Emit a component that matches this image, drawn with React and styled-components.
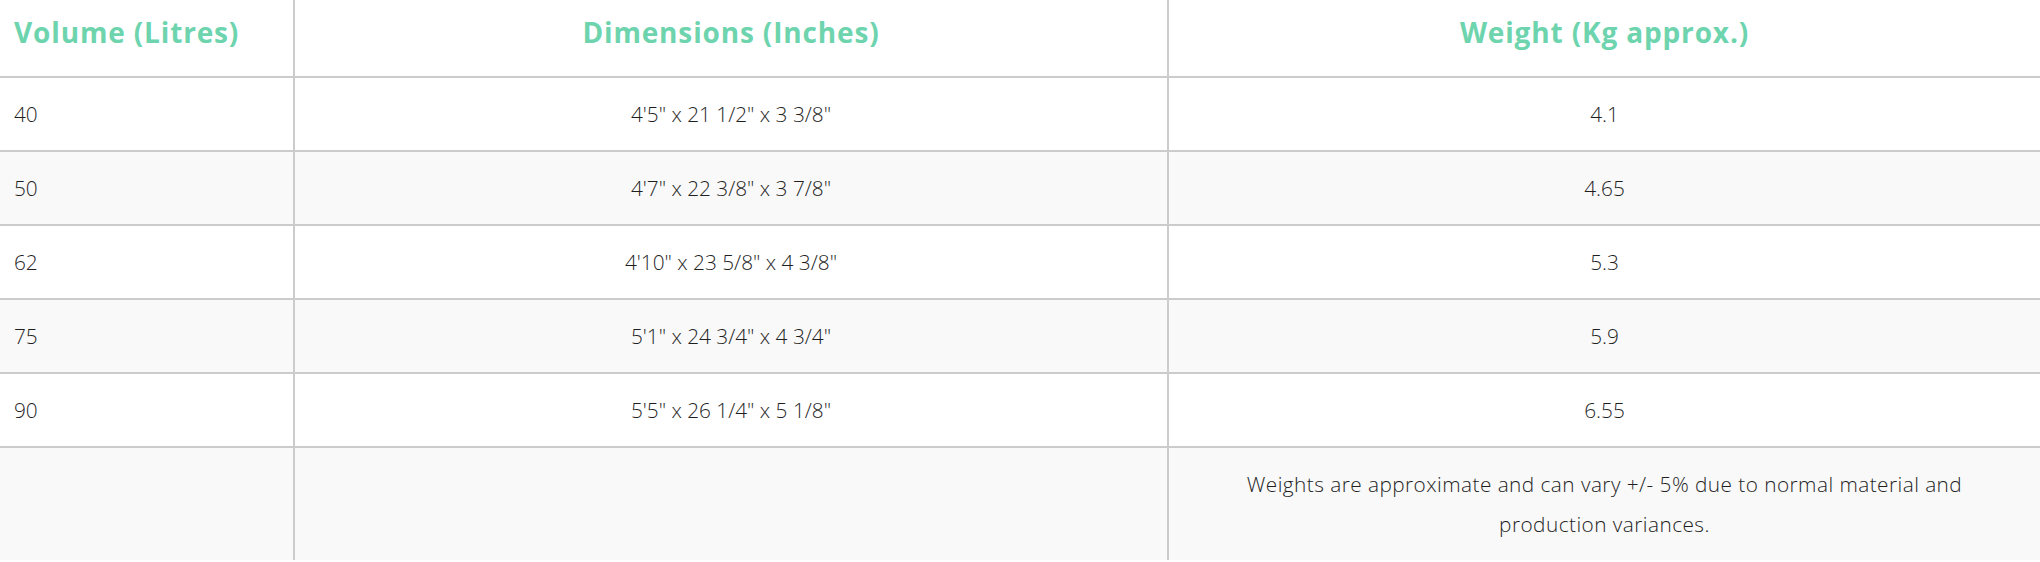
import React from "react";
import styled, { createGlobalStyle } from "styled-components";

const Global = createGlobalStyle`
  html, body { margin: 0; padding: 0; background: #ffffff; }
  body { font-family: "Open Sans", "Liberation Sans", sans-serif; }
`;

const Table = styled.table`
  width: 2040px;
  border-collapse: collapse;
  table-layout: fixed;
  font-family: "Open Sans", "Liberation Sans", sans-serif;
`;

const Col = styled.col`
  width: ${(p) => p.$w};
`;

const HeadCell = styled.th`
  height: 76px;
  box-sizing: border-box;
  padding: 12px 14px 24px;
  font-size: 28px;
  line-height: 40px;
  font-weight: 700;
  letter-spacing: 0.85px;
  color: #6dd4ae;
  text-align: ${(p) => p.$align || "center"};
  vertical-align: middle;
  border-bottom: 2px solid #cccccc;
  border-right: ${(p) => (p.$last ? "none" : "2px solid #cccccc")};
  white-space: nowrap;
`;

const Row = styled.tr`
  background: ${(p) => (p.$alt ? "#f9f9f9" : "#ffffff")};
`;

const Cell = styled.td`
  height: 72px;
  box-sizing: border-box;
  padding: 16px 14px;
  font-size: 20.8px;
  line-height: 40px;
  font-weight: 300;
  color: #1f1f1f;
  text-align: ${(p) => p.$align || "center"};
  vertical-align: middle;
  border-bottom: 2px solid #cccccc;
  border-right: ${(p) => (p.$last ? "none" : "2px solid #cccccc")};
`;

const NoteCell = styled(Cell)`
  border-bottom: none;
  height: auto;
  vertical-align: top;
`;

const Note = styled.div`
  max-width: 780px;
  margin: 0 auto;
  letter-spacing: 0.45px;
`;

const rows = [
  ["40", `4'5" x 21 1/2" x 3 3/8"`, "4.1"],
  ["50", `4'7" x 22 3/8" x 3 7/8"`, "4.65"],
  ["62", `4'10" x 23 5/8" x 4 3/8"`, "5.3"],
  ["75", `5'1" x 24 3/4" x 4 3/4"`, "5.9"],
  ["90", `5'5" x 26 1/4" x 5 1/8"`, "6.55"],
];

export default function App() {
  return (
    <>
      <Global />
      <Table>
        <colgroup>
          <Col $w="294px" />
          <Col $w="874px" />
          <Col $w="872px" />
        </colgroup>
        <thead>
          <tr>
            <HeadCell $align="left">Volume (Litres)</HeadCell>
            <HeadCell>Dimensions (Inches)</HeadCell>
            <HeadCell $last>Weight (Kg approx.)</HeadCell>
          </tr>
        </thead>
        <tbody>
          {rows.map((r, i) => (
            <Row key={r[0]} $alt={i % 2 === 1}>
              <Cell $align="left">{r[0]}</Cell>
              <Cell>{r[1]}</Cell>
              <Cell $last>{r[2]}</Cell>
            </Row>
          ))}
          <Row $alt>
            <NoteCell />
            <NoteCell />
            <NoteCell $last>
              <Note>
                Weights are approximate and can vary +/- 5% due to normal material and production variances.
              </Note>
            </NoteCell>
          </Row>
        </tbody>
      </Table>
    </>
  );
}
